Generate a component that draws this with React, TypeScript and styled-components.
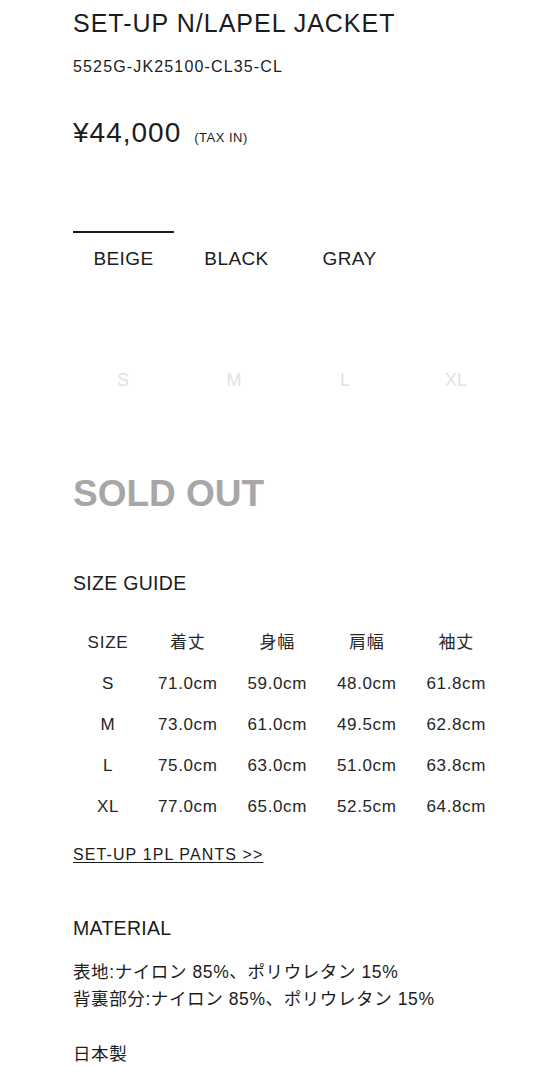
import React from "react";
import styled, { createGlobalStyle } from "styled-components";

const COLORS = [
  { id: 1, name: "BEIGE", active: true },
  { id: 2, name: "BLACK", active: false },
  { id: 3, name: "GRAY", active: false },
];

const SIZES = ["S", "M", "L", "XL"];

const GUIDE_HEAD = ["SIZE", "着丈", "身幅", "肩幅", "袖丈"];

const GUIDE_ROWS = [
  ["S", "71.0cm", "59.0cm", "48.0cm", "61.8cm"],
  ["M", "73.0cm", "61.0cm", "49.5cm", "62.8cm"],
  ["L", "75.0cm", "63.0cm", "51.0cm", "63.8cm"],
  ["XL", "77.0cm", "65.0cm", "52.5cm", "64.8cm"],
];

const MATERIALS = [
  "表地:ナイロン 85%、ポリウレタン 15%",
  "背裏部分:ナイロン 85%、ポリウレタン 15%",
];

function App() {
  return (
    <>
      <GlobalStyle />
      <Page>
        <Title>SET-UP N/LAPEL JACKET</Title>
        <Sku>5525G-JK25100-CL35-CL</Sku>
        <PriceRow>
          <Price>¥44,000</Price>
          <Tax>(TAX IN)</Tax>
        </PriceRow>

        <ColorTabs>
          {COLORS.map((c) => (
            <ColorTab key={c.id} $active={c.active}>
              {c.name}
            </ColorTab>
          ))}
        </ColorTabs>

        <SizeList>
          {SIZES.map((s) => (
            <SizeItem key={s}>{s}</SizeItem>
          ))}
        </SizeList>

        <SoldOut>SOLD OUT</SoldOut>

        <SectionTitle $top={53}>SIZE GUIDE</SectionTitle>
        <GuideTable>
          {GUIDE_HEAD.map((h) => (
            <GuideCell key={h} $head>
              {h}
            </GuideCell>
          ))}
          {GUIDE_ROWS.map((row) =>
            row.map((v, i) => <GuideCell key={row[0] + i}>{v}</GuideCell>)
          )}
        </GuideTable>

        <PantsLink href="#">SET-UP 1PL PANTS &gt;&gt;</PantsLink>

        <SectionTitle $top={47}>MATERIAL</SectionTitle>
        <MaterialText>
          {MATERIALS.map((m) => (
            <div key={m}>{m}</div>
          ))}
        </MaterialText>
        <Origin>日本製</Origin>
      </Page>
    </>
  );
}

export default App;

const GlobalStyle = createGlobalStyle`
  body {
    margin: 0;
    background: #fff;
    color: #1c1c1c;
    font-family: "Liberation Sans", "Noto Sans CJK JP", sans-serif;
  }
`;

const Page = styled.div`
  display: flex;
  flex-direction: column;
  align-items: flex-start;
  padding: 4px 0 20px 73px;
`;

const Title = styled.h1`
  margin: 0;
  font-size: 25px;
  font-weight: 400;
  line-height: 38px;
  letter-spacing: 1px;
`;

const Sku = styled.div`
  margin-top: 13px;
  font-size: 16px;
  line-height: 24px;
  letter-spacing: 1.15px;
`;

const PriceRow = styled.div`
  display: flex;
  align-items: baseline;
  gap: 13px;
  margin-top: 34px;
`;

const Price = styled.span`
  font-size: 28px;
  line-height: 40px;
  letter-spacing: 1px;
`;

const Tax = styled.span`
  font-size: 13px;
  letter-spacing: 0.5px;
`;

const ColorTabs = styled.div`
  display: flex;
  gap: 12px;
  margin-top: 78px;
`;

const ColorTab = styled.div<{ $active: boolean }>`
  width: 101px;
  border-top: 2px solid ${(p) => (p.$active ? "#1c1c1c" : "transparent")};
  padding-top: 14px;
  text-align: center;
  font-size: 19px;
  line-height: 24px;
  letter-spacing: 0.4px;
`;

const SizeList = styled.div`
  display: grid;
  grid-template-columns: repeat(4, 100px);
  column-gap: 11px;
  margin-top: 97px;
`;

const SizeItem = styled.div`
  text-align: center;
  font-size: 18px;
  line-height: 24px;
  color: #e2e2e2;
`;

const SoldOut = styled.div`
  margin-top: 80px;
  font-size: 37px;
  font-weight: 700;
  line-height: 44px;
  color: #a7a7a7;
`;

const SectionTitle = styled.h2<{ $top: number }>`
  margin: ${(p) => p.$top}px 0 0;
  font-size: 19.5px;
  font-weight: 400;
  line-height: 28px;
  letter-spacing: 0.3px;
`;

const GuideTable = styled.div`
  display: grid;
  grid-template-columns: 70px repeat(4, 89.5px);
  grid-auto-rows: 40.8px;
  margin-top: 26px;
`;

const GuideCell = styled.div<{ $head?: boolean }>`
  display: flex;
  align-items: center;
  justify-content: center;
  font-size: 17px;
  line-height: 24px;
  letter-spacing: ${(p) => (p.$head ? "0.8px" : "0.6px")};
  color: #262626;
`;

const PantsLink = styled.a`
  margin-top: 16px;
  font-size: 16px;
  line-height: 24px;
  letter-spacing: 1.1px;
  color: #1c1c1c;
  text-decoration: underline;
  text-underline-offset: 2px;
`;

const MaterialText = styled.div`
  margin-top: 17px;
  font-size: 17.5px;
  line-height: 27px;
  letter-spacing: 0.6px;
`;

const Origin = styled.div`
  margin-top: 28px;
  font-size: 17.5px;
  line-height: 27px;
  letter-spacing: 0.6px;
`;
